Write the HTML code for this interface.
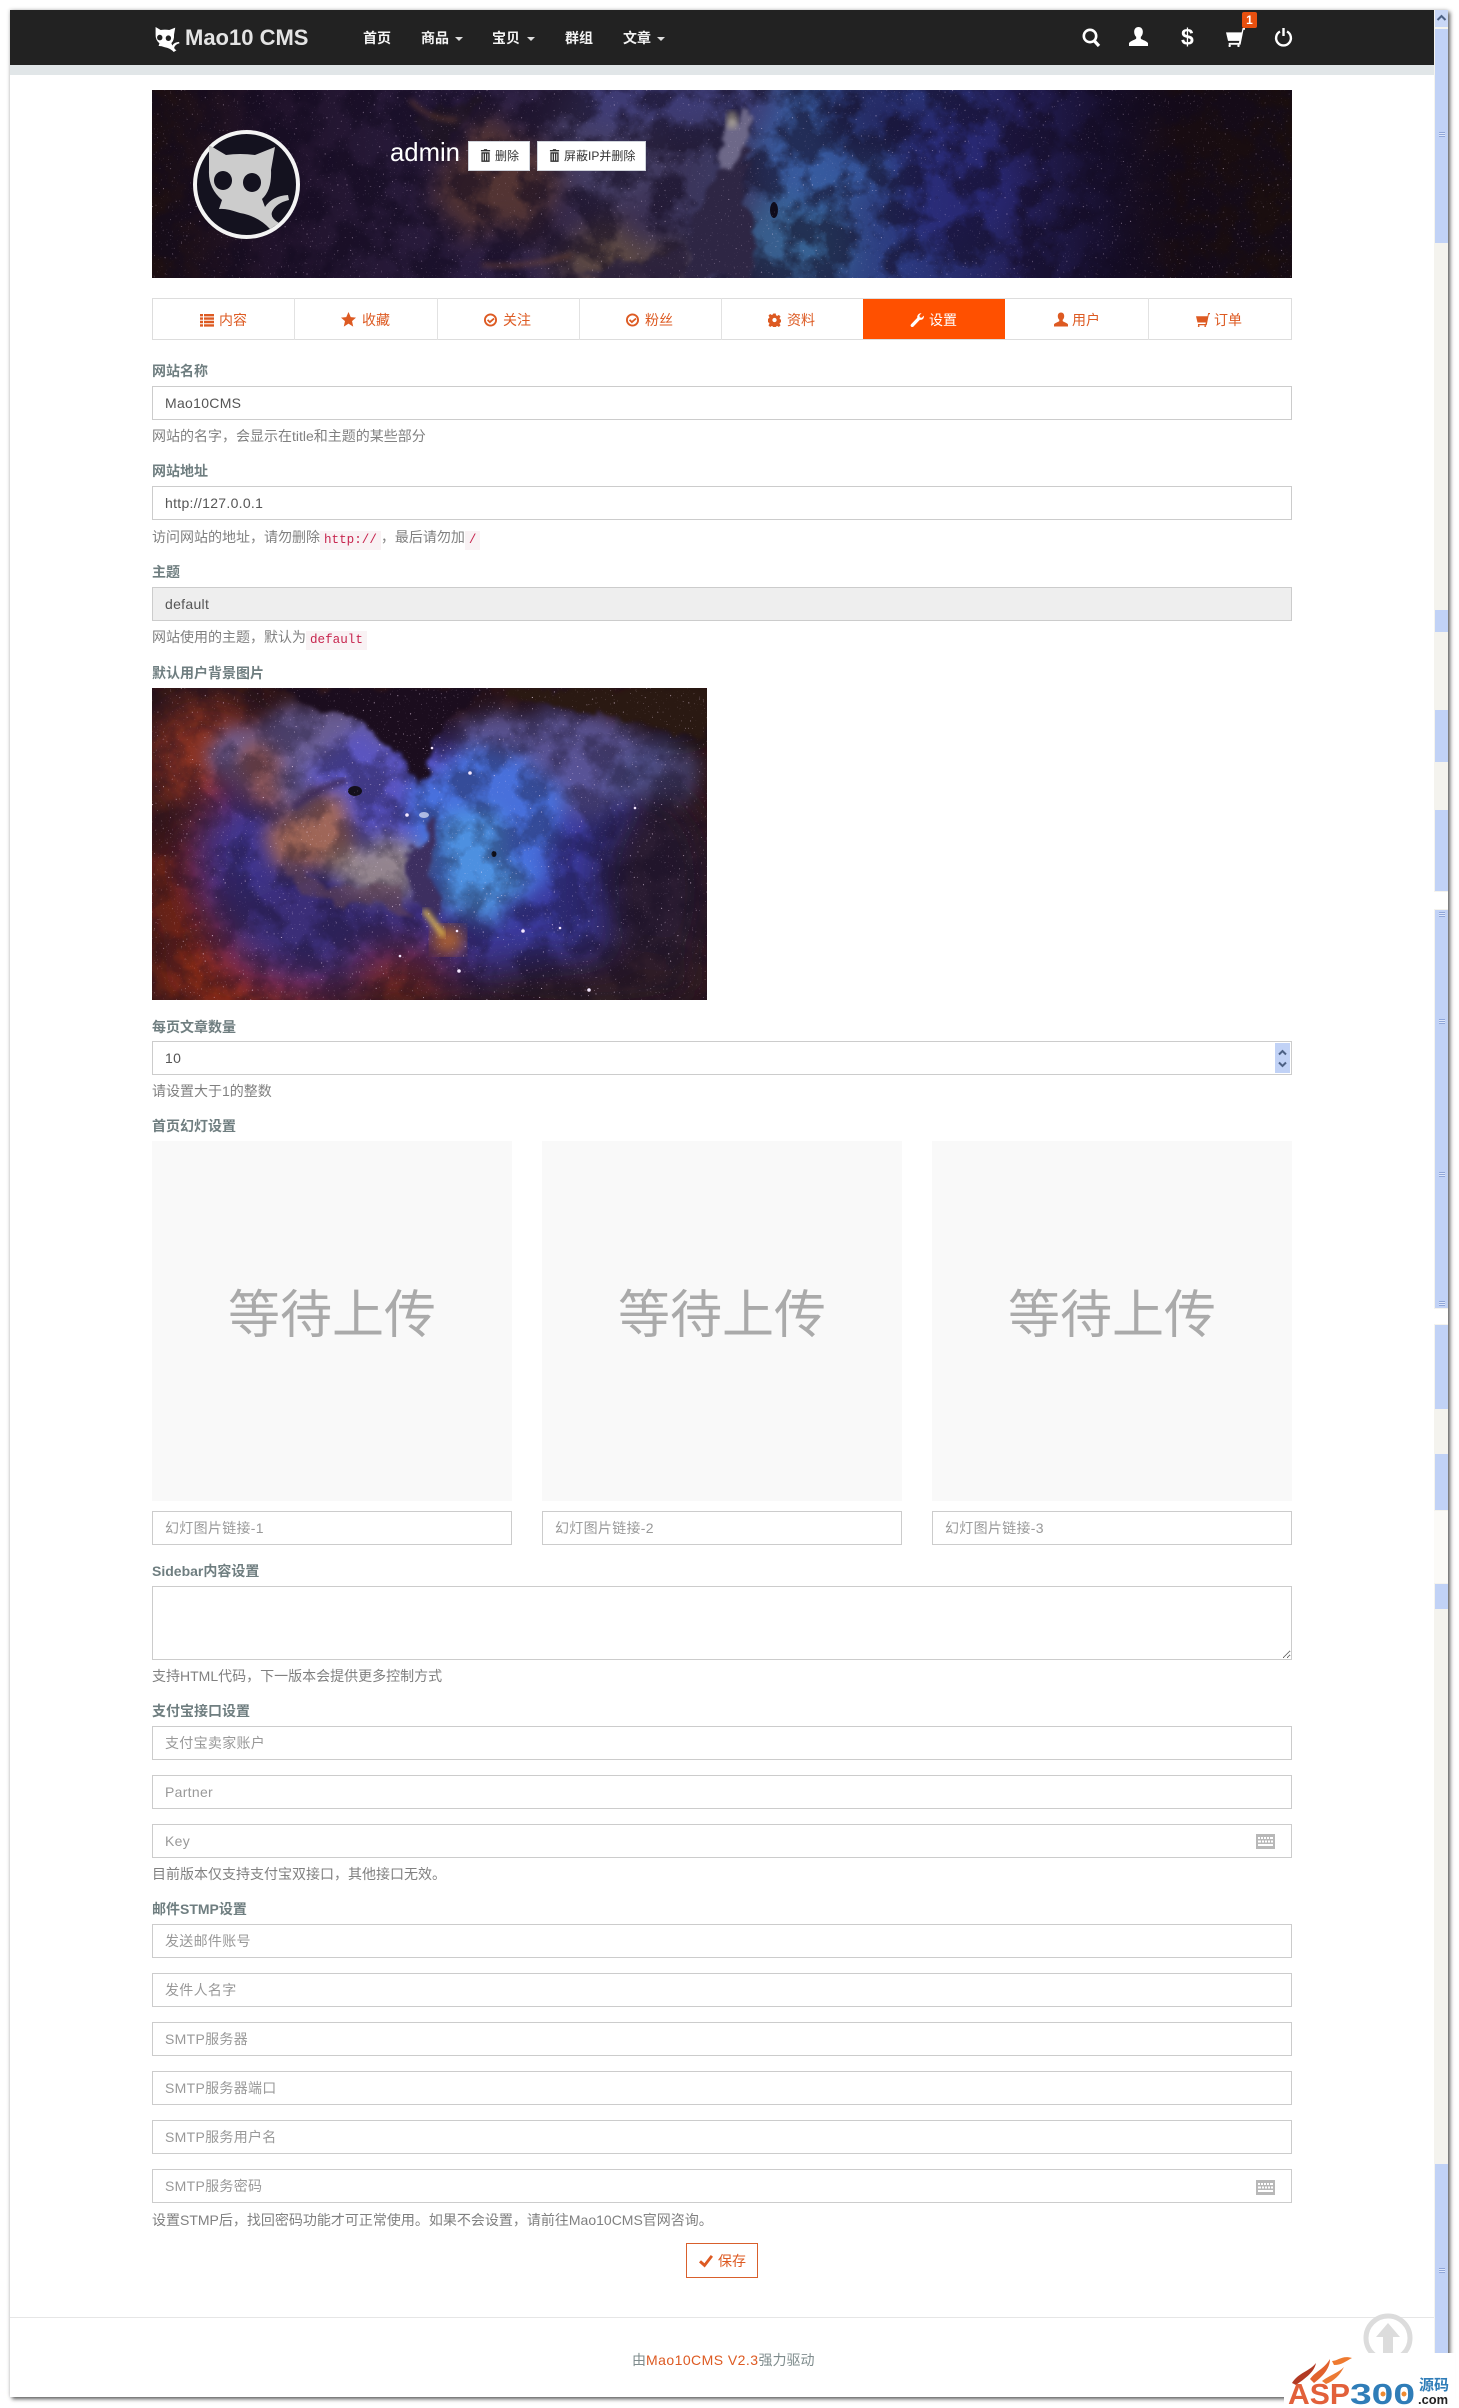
<!DOCTYPE html>
<html lang="zh">
<head>
<meta charset="utf-8">
<title>Mao10 CMS</title>
<style>
html,body{margin:0;padding:0;background:#fff}
body{position:relative;width:1459px;height:2408px;overflow:hidden;font:14px/20px "Liberation Sans","Noto Sans CJK SC",sans-serif;color:#7a8586}
.a{position:absolute}
.frame{left:10px;top:10px;width:1438px;height:2387px;box-shadow:2px 2px 4px rgba(0,0,0,.65),-1px -1px 3px rgba(0,0,0,.10)}
.nav{left:10px;top:10px;width:1424px;height:55px;background:#222}
.band{left:10px;top:65px;width:1424px;height:10px;background:#e1e6e8}
.ni{top:28px;font-weight:bold;color:#f4f4f4;white-space:nowrap}
.caret{top:37px;width:0;height:0;border-left:4px solid transparent;border-right:4px solid transparent;border-top:4px solid #ddd}
.ic{position:absolute;fill:#fff}
.tabs{left:152px;top:298px;width:1138px;height:40px;border:1px solid #ddd}
.tabd{top:298px;width:1px;height:42px;background:#e2e2e2}
.tt{top:310px;color:#dd5a22;white-space:nowrap}
.ti{position:absolute;fill:#dd5a22}
label{position:absolute;left:152px;font-weight:bold;color:#6f7e80;white-space:nowrap}
.h{left:152px;color:#808080;white-space:nowrap}
code{font:12.6px/19px "Liberation Mono",monospace;color:#c7254e;background:#f9f2f4;padding:0 4px;display:inline-block;vertical-align:-1px}
input,textarea{position:absolute;box-sizing:border-box;margin:0;border:1px solid #ccc;background:#fff;padding:0 12px;font:14px "Liberation Sans","Noto Sans CJK SC",sans-serif;color:#555;letter-spacing:.3px;outline:0;border-radius:0}
input::placeholder{color:#999;opacity:1}
.w{left:152px;width:1140px;height:34px}
.slide{top:1141px;width:360px;height:360px;background:#f9f9f9;color:#aaa;font-size:52px;line-height:350px;text-align:center}
.s3{top:1511px;width:360px;height:34px}
.bar{left:1434px;width:14px;background:#f4f3ee}
.th{left:1435px;width:13px;background:#c1d2f6}
.gr{left:1439px;width:6px;height:5px;background:repeating-linear-gradient(#8fa6d8 0 1px,#dfe8fc 1px 2px)}
.btn{background:#fff;border:1px solid #cfd3da;box-sizing:border-box;height:30px;top:141px;color:#333;font-size:12px;line-height:28px;white-space:nowrap}
</style>
</head>
<body>
<svg width="0" height="0" style="position:absolute">
<defs>
<symbol id="i-list" viewBox="0 0 14 14"><path d="M0 1h3v2.4H0zM4 1h10v2.4H4zM0 4.4h3v2.4H0zM4 4.4h10v2.4H4zM0 7.800h3v2.400H0zM4 7.800h10v2.400H4zM0 11.200h3v2.400H0zM4 11.200h10v2.400H4z"/></symbol>
<symbol id="i-star" viewBox="0 0 14 14"><path d="M7 0l2.100 4.800 4.900.4-3.700 3.300 1.100 5.100L7 10.900 2.600 13.600l1.100-5.100L0 5.200l4.900-.4z"/></symbol>
<symbol id="i-ok" viewBox="0 0 14 14"><path fill-rule="evenodd" d="M7 0a7 7 0 1 1 0 14A7 7 0 0 1 7 0zm0 2a5 5 0 1 0 0 10A5 5 0 0 0 7 2zM10.200 4.700l1.300 1.300L6.300 10.600 3.200 7.500 4.500 6.200 6.300 8z"/></symbol>
<symbol id="i-gear" viewBox="0 0 14 14"><path fill-rule="evenodd" d="M5.700 0h2.600l.4 2 1.300.6 1.700-1.100 1.800 1.800-1.100 1.700.6 1.300 2 .4v2.600l-2 .4-.6 1.300 1.100 1.700-1.800 1.800-1.700-1.100-1.300.6-.4 2H5.700l-.4-2-1.300-.6-1.700 1.100-1.800-1.800 1.100-1.700-.6-1.300-2-.4V5.700l2-.4.6-1.300-1.100-1.700 1.800-1.800 1.700 1.100 1.300-.6zM7 4.700a2.300 2.300 0 1 0 0 4.600 2.300 2.300 0 0 0 0-4.600z"/></symbol>
<symbol id="i-wrench" viewBox="0 0 14 14"><path d="M13.800 2.600c.4 1.700-.3 3.400-1.800 4-.8.300-1.500.3-2.100.1L3.500 13.500c-.7.700-1.700.7-2.400.1-.7-.7-.7-1.700 0-2.400L7.300 4.700C7.100 3.900 7.200 3 7.700 2.200 8.500 .8 10 .1 11.500.3L9.400 2.400l.4 2 2 .4z"/></symbol>
<symbol id="i-user" viewBox="0 0 14 14"><path d="M7 0c2 0 3.200 1.500 3.200 3.600 0 1.500-.6 2.900-1.500 3.700v1.200c0 .7 4.300 1.700 5.300 3.400V14H0v-2.100c1-1.700 5.300-2.700 5.300-3.400V7.300C4.400 6.500 3.800 5.100 3.800 3.600 3.800 1.500 5 0 7 0z"/></symbol>
<symbol id="i-cart" viewBox="0 0 14 14"><path d="M14 0h-1.800l-.7 3.200H0l1.500 6.300h8.300l-.3 1.500H2v1.300h8.700L12.900 1.300H14zM3 12.300a.9.9 0 1 0 0 1.700.9.9 0 0 0 0-1.700zM9.500 12.300a.9.9 0 1 0 0 1.700.9.9 0 0 0 0-1.700z"/></symbol>
<symbol id="i-check" viewBox="0 0 14 14"><path d="M11.800 1L14 2.800 5.700 13.500 0 8.400l2-2.200 3.400 3z"/></symbol>
<symbol id="i-trash" viewBox="0 0 12 14"><path d="M4.500 0h3l.5 1h3v1.500H1V1h3zM1.500 3.500h9V14h-9zM3 5v7.500h1V5zM5.500 5v7.500h1V5zM8 5v7.500h1V5z"/></symbol>
<symbol id="i-kb" viewBox="0 0 19 15"><path fill-rule="evenodd" d="M0 0h19v15H0zM2 3v2h2V3zM5 3v2h2V3zM8 3v2h2V3zM11 3v2h2V3zM14 3v2h3V3zM2 6.500v2h3v-2zM6 6.500v2h2v-2zM9 6.500v2h2v-2zM12 6.500v2h2v-2zM15 6.500v2h2v-2zM2 10v2h15v-2z"/></symbol>
<symbol id="i-cat" viewBox="207 144 84 86"><path fill-rule="evenodd" d="M209 145L226 155Q240 153 255 155L275 147L271 170Q272 190 262 199L265 207Q272 196 288 195L289 200Q276 203 272 212Q270 218 279 223L270 229Q258 216 240 213Q226 208 219 209L222 200Q208 188 209 170ZM223 171a9 9.500 0 1 0 .01 0ZM252 173a9 9.500 0 1 0 .01 0Z"/></symbol>
<filter id="cloud" x="-20%" y="-20%" width="140%" height="140%" color-interpolation-filters="sRGB"><feTurbulence type="fractalNoise" baseFrequency=".018" numOctaves="5" seed="4" result="n"/><feDisplacementMap in="SourceGraphic" in2="n" scale="60" xChannelSelector="R" yChannelSelector="G"/><feGaussianBlur stdDeviation="13"/></filter>
<filter id="cloud2" x="-20%" y="-20%" width="140%" height="140%" color-interpolation-filters="sRGB"><feTurbulence type="fractalNoise" baseFrequency=".022" numOctaves="5" seed="11" result="n"/><feDisplacementMap in="SourceGraphic" in2="n" scale="48" xChannelSelector="R" yChannelSelector="G"/><feGaussianBlur stdDeviation="9"/></filter>
<filter id="edge" x="-10%" y="-10%" width="120%" height="120%" color-interpolation-filters="sRGB"><feTurbulence type="fractalNoise" baseFrequency=".05" numOctaves="4" seed="9" result="n"/><feDisplacementMap in="SourceGraphic" in2="n" scale="22" xChannelSelector="R" yChannelSelector="G"/><feGaussianBlur stdDeviation="1.800"/></filter>
<filter id="mott" x="0" y="0" width="100%" height="100%" color-interpolation-filters="sRGB"><feTurbulence type="fractalNoise" baseFrequency=".03" numOctaves="5" seed="21"/><feColorMatrix values="0 0 0 0 .07 0 0 0 0 .04 0 0 0 0 .12 4 0 0 0 -1.500"/></filter>
<filter id="stars" x="0" y="0" width="100%" height="100%" color-interpolation-filters="sRGB"><feTurbulence type="fractalNoise" baseFrequency=".55" numOctaves="1" seed="7"/><feColorMatrix values="0 0 0 0 1 0 0 0 0 .9 0 0 0 0 1 7 0 0 0 -4.800"/></filter>
<filter id="b3"><feGaussianBlur stdDeviation="3"/></filter>
<filter id="b8"><feGaussianBlur stdDeviation="8"/></filter>
<filter id="b18" x="-40%" y="-40%" width="180%" height="180%"><feGaussianBlur stdDeviation="18"/></filter>
<linearGradient id="hb" x1="0" x2="1" y1="0" y2="0">
<stop offset="0" stop-color="#1d0f10"/><stop offset=".1" stop-color="#20122a"/><stop offset=".28" stop-color="#2a1d40"/><stop offset=".42" stop-color="#3a2e50"/><stop offset=".52" stop-color="#3c3c66"/><stop offset=".58" stop-color="#34508a"/><stop offset=".66" stop-color="#2c3a80"/><stop offset=".76" stop-color="#241f58"/><stop offset=".84" stop-color="#170f2c"/><stop offset=".9" stop-color="#180c12"/><stop offset="1" stop-color="#1a0e0e"/>
</linearGradient>
</defs>
</svg>

<div class="a frame"></div>
<div class="a nav"></div>
<div class="a band"></div>

<svg class="ic" style="left:155px;top:26px;width:25px;height:27px"><use href="#i-cat"/></svg>
<div class="a" style="left:185px;top:24px;font:bold 22px/28px 'Liberation Sans',sans-serif;color:#e4e4e4;white-space:nowrap">Mao10 CMS</div>
<div class="a ni" style="left:363px">首页</div>
<div class="a ni" style="left:421px">商品</div><div class="a caret" style="left:455px"></div>
<div class="a ni" style="left:492px">宝贝</div><div class="a caret" style="left:527px"></div>
<div class="a ni" style="left:565px">群组</div>
<div class="a ni" style="left:623px">文章</div><div class="a caret" style="left:657px"></div>

<svg class="a" style="left:1082px;top:28px" width="19" height="19" viewBox="0 0 19 19"><circle cx="8" cy="8" r="6.200" fill="none" stroke="#fff" stroke-width="2.600"/><path d="M12 12.500l5 5.500" stroke="#fff" stroke-width="3.200"/></svg>
<svg class="ic" style="left:1129px;top:27px;width:19px;height:19px"><use href="#i-user"/></svg>
<div class="a" style="left:1181px;top:25px;font:bold 23px/24px 'Liberation Sans',sans-serif;color:#fff">$</div>
<svg class="ic" style="left:1226px;top:28px;width:19px;height:19px"><use href="#i-cart"/></svg>
<div class="a" style="left:1242px;top:12px;width:15px;height:16px;background:#e8500f;border-radius:2px;color:#fff;font:bold 12px/16px 'Liberation Sans',sans-serif;text-align:center">1</div>
<svg class="a" style="left:1274px;top:28px" width="19" height="19" viewBox="0 0 19 19"><path d="M6 3.500a7.400 7.400 0 1 0 7 0" fill="none" stroke="#fff" stroke-width="2.400"/><path d="M9.500 0v8" stroke="#fff" stroke-width="2.400"/></svg>

<!-- scrollbar -->
<div class="a bar" style="top:10px;height:2387px"></div>
<div class="a" style="left:1435px;top:10px;width:13px;height:17px;background:#c9d7f6"></div>
<svg class="a" style="left:1436px;top:14px" width="11" height="8" viewBox="0 0 11 8"><path d="M1.500 6L5.500 2l4 4" fill="none" stroke="#4d6185" stroke-width="2"/></svg>
<div class="a th" style="top:29px;height:214px"></div><div class="a gr" style="top:132px"></div>
<div class="a th" style="top:610px;height:22px"></div>
<div class="a th" style="top:710px;height:52px"></div>
<div class="a th" style="top:810px;height:81px"></div>
<div class="a" style="left:1434px;top:892px;width:14px;height:17px;background:#fff"></div>
<div class="a th" style="top:910px;height:398px"></div><div class="a gr" style="top:912px"></div><div class="a gr" style="top:1019px"></div><div class="a gr" style="top:1172px"></div><div class="a gr" style="top:1301px"></div>
<div class="a" style="left:1434px;top:1309px;width:14px;height:15px;background:#fff"></div>
<div class="a th" style="top:1325px;height:84px"></div>
<div class="a th" style="top:1454px;height:56px"></div>
<div class="a" style="left:1434px;top:1511px;width:14px;height:72px;background:#fbfaf7"></div>
<div class="a th" style="top:1584px;height:25px"></div>
<div class="a th" style="top:2164px;height:189px"></div><div class="a gr" style="top:2268px"></div>

<!-- hero -->
<svg class="a" style="left:152px;top:90px" width="1140" height="188" viewBox="0 0 1140 188">
<defs><clipPath id="hc"><rect width="1140" height="188"/></clipPath></defs>
<g clip-path="url(#hc)">
<rect width="1140" height="188" fill="url(#hb)"/>
<g filter="url(#cloud)">
<ellipse cx="345" cy="95" rx="60" ry="58" fill="#5c3a30" opacity=".8"/>
<ellipse cx="470" cy="165" rx="70" ry="22" fill="#6e573f" opacity=".7"/>
<ellipse cx="460" cy="60" rx="60" ry="55" fill="#504f78" opacity=".55"/>
<ellipse cx="520" cy="10" rx="95" ry="34" fill="#3e3e80" opacity=".7"/>
<ellipse cx="660" cy="60" rx="58" ry="66" fill="#385ea6" opacity=".75"/>
<ellipse cx="640" cy="150" rx="60" ry="40" fill="#386a98" opacity=".7"/>
<ellipse cx="800" cy="90" rx="60" ry="70" fill="#2a287a" opacity=".6"/>
<ellipse cx="720" cy="25" rx="60" ry="30" fill="#1f1c52" opacity=".6"/>
</g>
<rect width="1140" height="188" filter="url(#mott)" opacity=".55"/>
<g filter="url(#edge)">
<path d="M530 188L545 120 556 90 572 72 590 45 600 60 590 100 604 150 600 188Z" fill="#2e2644"/>
<path d="M565 70L580 30 596 18 592 60 580 80Z" fill="#6d6888"/>
<path d="M420 188L470 170 530 160 530 188Z" fill="#2e2440" opacity=".7"/>
<path d="M262 28L330 6 300 48 285 72Z" fill="#20151f" opacity=".6"/>
</g>
<path d="M258 10Q275 30 305 30M330 175Q375 178 420 165" stroke="#8a5232" stroke-width="3" fill="none" opacity=".6" filter="url(#b3)"/>
<ellipse cx="580" cy="30" rx="6" ry="9" fill="#cfc59a" opacity=".5" filter="url(#b3)"/>
<ellipse cx="622" cy="120" rx="4" ry="8" fill="#0f0c1c"/>
<rect width="1140" height="188" filter="url(#stars)" opacity=".5"/>
</g>
</svg>
<div class="a" style="left:193px;top:130px;width:99px;height:101px;border:4px solid #f4f4f4;border-radius:50%;background:#14121f"></div>
<svg class="a" style="left:207px;top:144px;fill:#ccc" width="84" height="86"><use href="#i-cat"/></svg>
<div class="a" style="left:390px;top:135px;font:25.7px/36px 'Liberation Sans',sans-serif;color:#fff;white-space:nowrap">admin</div>
<div class="a btn" style="left:468px;width:62px"><svg class="a" style="left:11px;top:7px;fill:#333" width="11" height="13"><use href="#i-trash"/></svg><span class="a" style="left:26px;top:0">删除</span></div>
<div class="a btn" style="left:537px;width:109px"><svg class="a" style="left:11px;top:7px;fill:#333" width="11" height="13"><use href="#i-trash"/></svg><span class="a" style="left:26px;top:0">屏蔽IP并删除</span></div>

<!-- tabs -->
<div class="a tabs"></div>
<div class="a tabd" style="left:294px"></div><div class="a tabd" style="left:437px"></div><div class="a tabd" style="left:579px"></div><div class="a tabd" style="left:721px"></div><div class="a tabd" style="left:1148px"></div>
<div class="a" style="left:863px;top:299px;width:142px;height:40px;background:#ff5000"></div>
<svg class="ti" style="left:200px;top:313px;width:14px;height:14px"><use href="#i-list"/></svg><div class="a tt" style="left:219px">内容</div>
<svg class="ti" style="left:341px;top:312px;width:15px;height:15px"><use href="#i-star"/></svg><div class="a tt" style="left:362px">收藏</div>
<svg class="ti" style="left:484px;top:313px;width:13px;height:14px"><use href="#i-ok"/></svg><div class="a tt" style="left:503px">关注</div>
<svg class="ti" style="left:626px;top:313px;width:13px;height:14px"><use href="#i-ok"/></svg><div class="a tt" style="left:645px">粉丝</div>
<svg class="ti" style="left:768px;top:313px;width:13px;height:14px"><use href="#i-gear"/></svg><div class="a tt" style="left:787px">资料</div>
<svg class="ti" style="left:910px;top:313px;width:14px;height:14px;fill:#fff"><use href="#i-wrench"/></svg><div class="a tt" style="left:929px;color:#fff">设置</div>
<svg class="ti" style="left:1054px;top:312px;width:14px;height:15px"><use href="#i-user"/></svg><div class="a tt" style="left:1072px">用户</div>
<svg class="ti" style="left:1196px;top:313px;width:14px;height:14px"><use href="#i-cart"/></svg><div class="a tt" style="left:1214px">订单</div>

<!-- form -->
<label style="top:361px">网站名称</label>
<input class="w" style="top:386px" value="Mao10CMS">
<div class="a h" style="top:426px">网站的名字，会显示在title和主题的某些部分</div>

<label style="top:461px">网站地址</label>
<input class="w" style="top:486px" value="http://127.0.0.1">
<div class="a h" style="top:527px">访问网站的地址，请勿删除<code>http://</code>，最后请勿加<code>/</code></div>

<label style="top:562px">主题</label>
<input class="w" style="top:587px;background:#eee" value="default" disabled>
<div class="a h" style="top:627px">网站使用的主题，默认为<code>default</code></div>

<label style="top:663px">默认用户背景图片</label>
<svg class="a" style="left:152px;top:688px" width="555" height="312" viewBox="0 0 555 312">
<defs><clipPath id="cl"><rect width="555" height="312"/></clipPath></defs>
<g clip-path="url(#cl)">
<rect width="555" height="312" fill="#2e1518"/>
<g filter="url(#b18)">
<ellipse cx="55" cy="70" rx="60" ry="55" fill="#8a3322"/>
<ellipse cx="100" cy="285" rx="100" ry="50" fill="#8a2a18"/>
<ellipse cx="20" cy="200" rx="40" ry="60" fill="#6a2218"/>
<ellipse cx="240" cy="170" rx="190" ry="130" fill="#3f3690"/>
<ellipse cx="180" cy="240" rx="110" ry="60" fill="#3b2f78"/>
<ellipse cx="400" cy="170" rx="100" ry="110" fill="#3a3aa0"/>
<ellipse cx="500" cy="200" rx="60" ry="100" fill="#2c1c30"/>
<ellipse cx="520" cy="30" rx="50" ry="25" fill="#241408"/>
<ellipse cx="440" cy="295" rx="120" ry="35" fill="#2e1a26"/>
<ellipse cx="250" cy="285" rx="50" ry="25" fill="#7a2a22"/>
</g>
<g filter="url(#cloud2)">
<ellipse cx="160" cy="70" rx="95" ry="50" fill="#6b6098" opacity=".95"/>
<ellipse cx="400" cy="75" rx="110" ry="55" fill="#5c5698" opacity=".9"/>
<ellipse cx="500" cy="85" rx="45" ry="30" fill="#4c4e84" opacity=".7"/>
<ellipse cx="230" cy="105" rx="80" ry="55" fill="#5a54c4" opacity=".9"/>
<ellipse cx="330" cy="135" rx="75" ry="80" fill="#4872de" opacity=".95"/>
<ellipse cx="325" cy="175" rx="40" ry="55" fill="#4f96e0" opacity=".85"/>
<ellipse cx="160" cy="150" rx="42" ry="35" fill="#a86a50" opacity=".9"/>
<ellipse cx="225" cy="178" rx="48" ry="25" fill="#b0a090" opacity=".75"/>
<ellipse cx="110" cy="85" rx="20" ry="40" fill="#a0502f" opacity=".6"/>
</g>
<rect width="555" height="312" filter="url(#mott)" opacity=".35"/>
<g filter="url(#edge)">
<path d="M120 0H340L290 30 270 100 250 70 215 40 170 22Z" fill="#1b0d1e"/>
<path d="M350 0H555V50L480 35 390 14Z" fill="#2a1912"/>
<path d="M130 165L170 200 240 195 260 230 215 215 175 215 140 195Z" fill="#5f4258" opacity=".65"/>
<path d="M262 210L253 180 258 160 272 150 275 130 284 128 286 150 276 178 290 210 288 240 270 222Z" fill="#3d2f60"/>
</g>
<ellipse cx="296" cy="252" rx="16" ry="14" fill="#c8702a" opacity=".85" filter="url(#b8)"/>
<path d="M272 222L292 248" stroke="#e8c04a" stroke-width="5" filter="url(#b3)"/>
<path d="M140 120Q165 100 195 92" stroke="#3e2a58" stroke-width="6" fill="none" filter="url(#b3)"/>
<ellipse cx="203" cy="103" rx="7" ry="5" fill="#14101c"/>
<ellipse cx="342" cy="166" rx="2.500" ry="3" fill="#0e0e18"/>
<ellipse cx="272" cy="127" rx="5" ry="3" fill="#e0e6f8" opacity=".7"/>
<rect width="555" height="312" filter="url(#stars)" opacity=".7"/>
<g fill="#f5e8ff"><circle cx="305" cy="243" r="1.300"/><circle cx="248" cy="268" r="1.300"/><circle cx="371" cy="243" r="1.800"/><circle cx="408" cy="240" r="1.300"/><circle cx="307" cy="283" r="1.800"/><circle cx="437" cy="302" r="1.800"/><circle cx="483" cy="120" r="1.300"/><circle cx="280" cy="60" r="1.300"/><circle cx="318" cy="85" r="1.800"/><circle cx="255" cy="127" r="1.800"/></g>
</g>
</svg>

<label style="top:1017px">每页文章数量</label>
<input class="w" style="top:1041px" value="10">
<div class="a" style="left:1275px;top:1043px;width:15px;height:30px;background:#c1d2f6"></div>
<svg class="a" style="left:1276px;top:1045px" width="13" height="26" viewBox="0 0 13 26"><path d="M3 9.500l3.500-3.500 3.500 3.500M3 17.500l3.500 3.500 3.500-3.500" fill="none" stroke="#4d6185" stroke-width="2"/></svg>
<div class="a h" style="top:1081px">请设置大于1的整数</div>

<label style="top:1116px">首页幻灯设置</label>
<div class="a slide" style="left:152px">等待上传</div>
<div class="a slide" style="left:542px">等待上传</div>
<div class="a slide" style="left:932px">等待上传</div>
<input class="s3" style="left:152px;top:1511px" placeholder="幻灯图片链接-1">
<input class="s3" style="left:542px;top:1511px" placeholder="幻灯图片链接-2">
<input class="s3" style="left:932px;top:1511px" placeholder="幻灯图片链接-3">

<label style="top:1561px">Sidebar内容设置</label>
<textarea class="a" style="left:152px;top:1586px;width:1140px;height:74px"></textarea>
<div class="a h" style="top:1666px">支持HTML代码，下一版本会提供更多控制方式</div>

<label style="top:1701px">支付宝接口设置</label>
<input class="w" style="top:1726px" placeholder="支付宝卖家账户">
<input class="w" style="top:1775px" placeholder="Partner">
<input class="w" style="top:1824px" placeholder="Key">
<svg class="a" style="left:1256px;top:1834px;fill:#b8b8b8" width="19" height="15"><use href="#i-kb"/></svg>
<div class="a h" style="top:1864px">目前版本仅支持支付宝双接口，其他接口无效。</div>

<label style="top:1899px">邮件STMP设置</label>
<input class="w" style="top:1924px" placeholder="发送邮件账号">
<input class="w" style="top:1973px" placeholder="发件人名字">
<input class="w" style="top:2022px" placeholder="SMTP服务器">
<input class="w" style="top:2071px" placeholder="SMTP服务器端口">
<input class="w" style="top:2120px" placeholder="SMTP服务用户名">
<input class="w" style="top:2169px" placeholder="SMTP服务密码">
<svg class="a" style="left:1256px;top:2180px;fill:#b8b8b8" width="19" height="15"><use href="#i-kb"/></svg>
<div class="a h" style="top:2210px">设置STMP后，找回密码功能才可正常使用。如果不会设置，请前往Mao10CMS官网咨询。</div>

<div class="a" style="left:686px;top:2243px;width:70px;height:33px;border:1px solid #d9602c;background:#fff"></div>
<svg class="ti" style="left:699px;top:2254px;width:14px;height:14px"><use href="#i-check"/></svg>
<div class="a tt" style="left:718px;top:2251px">保存</div>

<div class="a" style="left:10px;top:2317px;width:1424px;height:1px;background:#e6e6e6"></div>
<div class="a" style="left:632px;top:2350px;color:#7f8c8d;white-space:nowrap">由<span style="color:#dd5a22;letter-spacing:.45px">Mao10CMS V2.3</span>强力驱动</div>

<!-- back to top -->
<svg class="a" style="left:1363px;top:2313px" width="50" height="50" viewBox="0 0 50 50"><circle cx="25" cy="25" r="22" fill="none" stroke="#dcdcdc" stroke-width="5"/><path d="M25 10L37 24H30V40H20V24H13Z" fill="#dcdcdc"/></svg>

<!-- watermark -->
<svg class="a" style="left:1284px;top:2353px" width="171" height="55" viewBox="0 0 171 55">
<rect width="171" height="55" fill="#fff"/>
<path d="M8 30C14 20 26 18 32 10 30 20 20 26 12 32Z" fill="#b23a24"/>
<path d="M26 26C32 18 40 16 46 6 46 16 38 24 30 30Z" fill="#e2622e"/>
<path d="M38 28C46 22 54 20 60 14 56 22 50 28 42 31Z" fill="#ec7a34"/>
<path d="M48 8C54 8 58 2 68 5 62 8 58 12 50 12Z" fill="#ee7a30"/>
<text x="4" y="51" font-family="Liberation Sans,sans-serif" font-weight="bold" font-size="29" fill="#e2603a" textLength="62" lengthAdjust="spacingAndGlyphs">ASP</text>
<text x="66" y="51" font-family="Liberation Sans,sans-serif" font-weight="bold" font-size="29" fill="#2f7db8" textLength="65" lengthAdjust="spacingAndGlyphs">300</text>
<circle cx="99" cy="41" r="2.500" fill="#f08a30"/><circle cx="120" cy="41" r="2.500" fill="#f08a30"/>
<text x="135" y="37" font-family="Noto Sans CJK SC,sans-serif" font-weight="bold" font-size="15" fill="#2f7db8">源码</text>
<text x="134" y="51" font-family="Liberation Sans,sans-serif" font-weight="bold" font-size="13" fill="#222" textLength="30" lengthAdjust="spacingAndGlyphs">.com</text>
</svg>
</body>
</html>
